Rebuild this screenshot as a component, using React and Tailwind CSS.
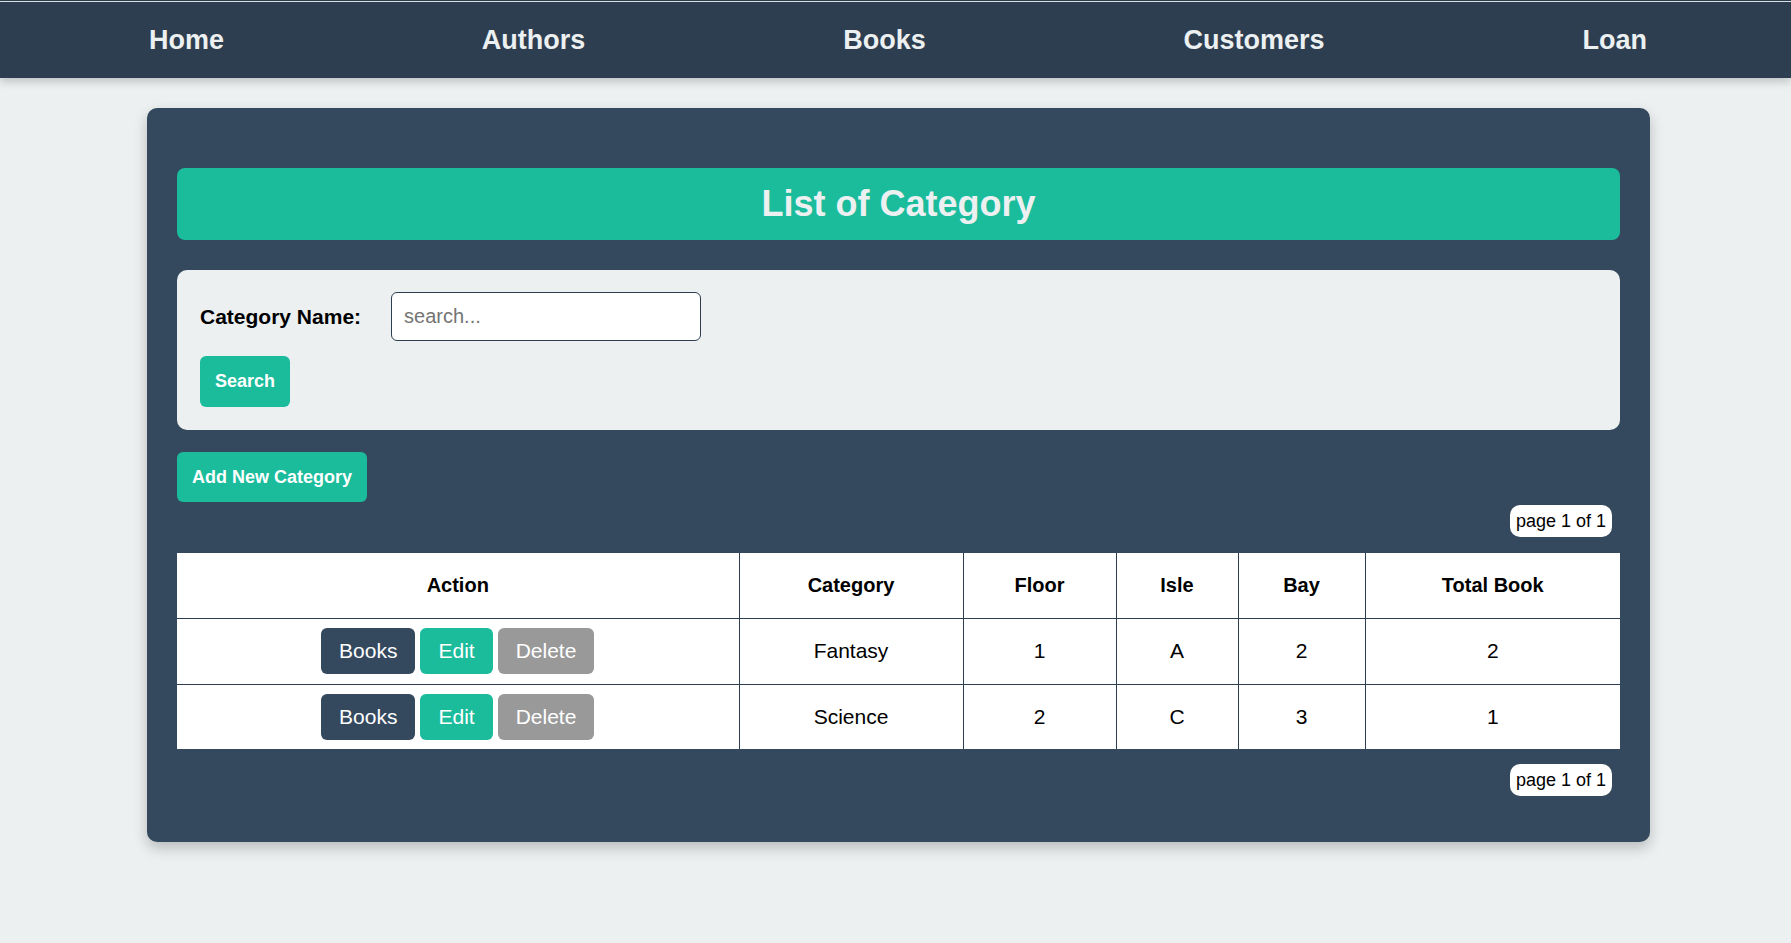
import React from 'react';

const navLinks = ['Home', 'Authors', 'Books', 'Customers', 'Loan'];

const categories = [
  { id: 1, name: 'Fantasy', floor: 1, isle: 'A', bay: 2, total: 2 },
  { id: 2, name: 'Science', floor: 2, isle: 'C', bay: 3, total: 1 },
];

function PageBadge() {
  return (
    <div className="flex justify-end pr-2">
      <span className="h-8 px-[6px] flex items-center bg-white rounded-[10px] text-[18px] text-black">
        page 1 of 1
      </span>
    </div>
  );
}

export default function App() {
  return (
    <div className="min-h-[943px] bg-[#ecf0f1] font-['Liberation_Sans',Arial,sans-serif]">
      <div className="h-px bg-[#2c3e50]" />
      <div className="h-px bg-[#dfe4e6]" />
      <nav className="h-[76px] bg-[#2c3e50] flex items-center justify-between pl-[149px] pr-[144px] shadow-[0_4px_8px_rgba(0,0,0,0.18)] relative">
        {navLinks.map((link) => (
          <a key={link} href="#" className="text-[27px] font-bold text-[#ecf0f1]">
            {link}
          </a>
        ))}
      </nav>

      <div className="pt-[30px] pb-[100px]">
        <div className="ml-[147px] w-[1503px] bg-[#34495e] rounded-[10px] p-[30px] shadow-[0_6px_14px_rgba(0,0,0,0.22)]">
          <h1 className="mt-[30px] h-[72px] flex items-center justify-center bg-[#1abc9c] rounded-[8px] text-[36px] font-bold text-[#ecf0f1]">
            List of Category
          </h1>

          <div className="mt-[30px] bg-[#ecf0f1] rounded-[10px] px-[23px] pt-[22px] pb-[23px]">
            <div className="flex items-center gap-[30px]">
              <label className="text-[21px] font-bold text-black">Category Name:</label>
              <input
                type="text"
                placeholder="search..."
                className="w-[310px] h-[49px] px-3 bg-white border border-[#2c3e50] rounded-[6px] text-[20px] placeholder:text-[#757575] outline-none"
              />
            </div>
            <button className="mt-[15px] h-[51px] px-[15px] bg-[#1abc9c] rounded-[6px] text-[18px] font-bold text-white">
              Search
            </button>
          </div>

          <button className="mt-[22px] h-[50px] px-[15px] bg-[#1abc9c] rounded-[6px] text-[18px] font-bold text-white">
            Add New Category
          </button>

          <div className="mt-[3px]">
            <PageBadge />
          </div>

          <table className="mt-4 w-full bg-white border-collapse text-[21px] text-black table-fixed">
            <colgroup>
              <col className="w-[562px]" />
              <col className="w-[224px]" />
              <col className="w-[153px]" />
              <col className="w-[122px]" />
              <col className="w-[127px]" />
              <col className="w-[255px]" />
            </colgroup>
            <thead>
              <tr className="h-[65px]">
                {['Action', 'Category', 'Floor', 'Isle', 'Bay', 'Total Book'].map((h, i) => (
                  <th
                    key={h}
                    className={`font-bold text-[20px] text-center border-b border-[#2c3e50] ${i > 0 ? 'border-l' : ''}`}
                  >
                    {h}
                  </th>
                ))}
              </tr>
            </thead>
            <tbody>
              {categories.map((c, idx) => (
                <tr key={c.id} className={idx === 0 ? 'h-[66px] border-b border-[#2c3e50]' : 'h-[65px]'}>
                  <td className="text-center">
                    <div className="flex justify-center gap-[5px]">
                      <button className="h-[46px] px-[18px] bg-[#34495e] rounded-[6px] text-white">Books</button>
                      <button className="h-[46px] px-[18px] bg-[#1abc9c] rounded-[6px] text-white">Edit</button>
                      <button className="h-[46px] px-[18px] bg-[#999999] rounded-[6px] text-white">Delete</button>
                    </div>
                  </td>
                  <td className="text-center border-l border-[#2c3e50]">{c.name}</td>
                  <td className="text-center border-l border-[#2c3e50]">{c.floor}</td>
                  <td className="text-center border-l border-[#2c3e50]">{c.isle}</td>
                  <td className="text-center border-l border-[#2c3e50]">{c.bay}</td>
                  <td className="text-center border-l border-[#2c3e50]">{c.total}</td>
                </tr>
              ))}
            </tbody>
          </table>

          <div className="mt-[15px] mb-[16px]">
            <PageBadge />
          </div>
        </div>
      </div>
    </div>
  );
}
